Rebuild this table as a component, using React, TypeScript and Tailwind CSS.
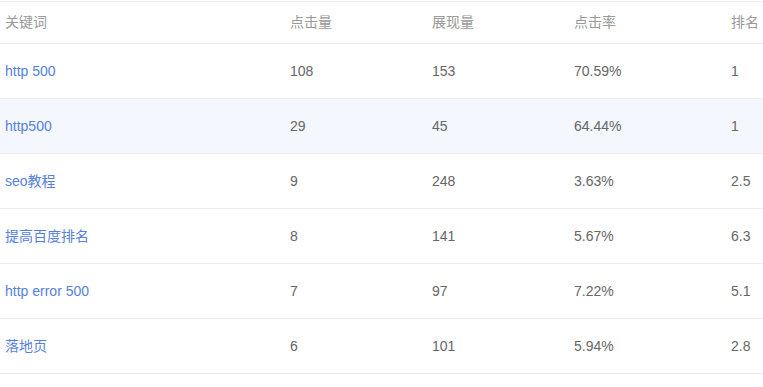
import React from "react";

const rows = [
  { kw: "http 500", clicks: "108", views: "153", ctr: "70.59%", rank: "1" },
  { kw: "http500", clicks: "29", views: "45", ctr: "64.44%", rank: "1", active: true },
  { kw: "seo教程", clicks: "9", views: "248", ctr: "3.63%", rank: "2.5" },
  { kw: "提高百度排名", clicks: "8", views: "141", ctr: "5.67%", rank: "6.3" },
  { kw: "http error 500", clicks: "7", views: "97", ctr: "7.22%", rank: "5.1" },
  { kw: "落地页", clicks: "6", views: "101", ctr: "5.94%", rank: "2.8" },
];

const grid = "grid grid-cols-[285px_142px_142px_157px_1fr] items-center";

export default function App() {
  return (
    <div
      className="w-[763px] h-[387px] bg-white text-[14px] overflow-hidden"
      style={{ fontFamily: '"Microsoft YaHei", "Liberation Sans", "Noto Sans CJK SC", sans-serif' }}
    >
      <div className="h-px mt-px bg-[#f0f0f0]" />
      <div className={`${grid} h-[42px] border-b border-[#ebebeb] text-[#999999]`}>
        <span className="pl-[5px]">关键词</span>
        <span className="pl-[5px]">点击量</span>
        <span className="pl-[5px]">展现量</span>
        <span className="pl-[5px]">点击率</span>
        <span className="pl-[5px] whitespace-nowrap">排名</span>
      </div>
      {rows.map((r) => (
        <div
          key={r.kw}
          className={`${grid} h-[55px] border-b border-[#ebebeb] text-[#666666] ${r.active ? "bg-[#f4f7fd]" : "bg-white"}`}
        >
          <span className="pl-[5px] text-[#5680e0]">{r.kw}</span>
          <span className="pl-[5px]">{r.clicks}</span>
          <span className="pl-[5px]">{r.views}</span>
          <span className="pl-[5px]">{r.ctr}</span>
          <span className="pl-[5px]">{r.rank}</span>
        </div>
      ))}
    </div>
  );
}
